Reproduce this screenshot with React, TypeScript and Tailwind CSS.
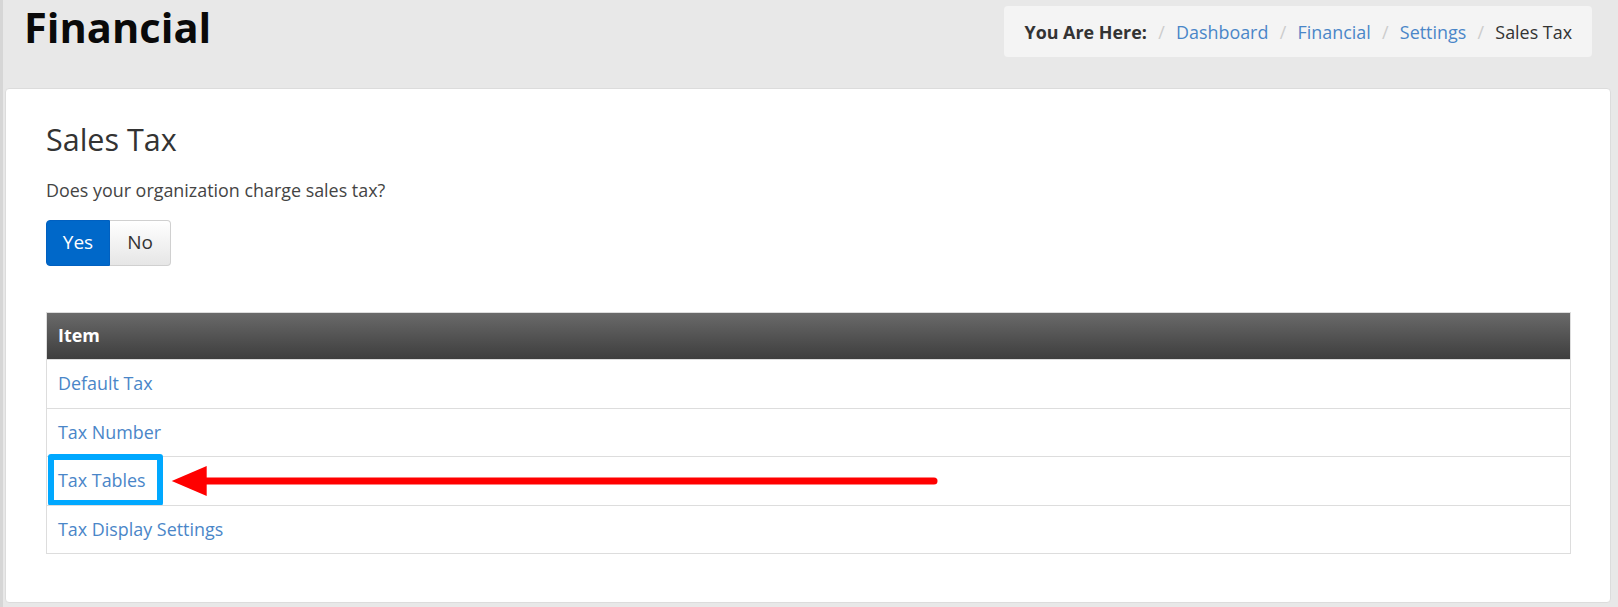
import React from "react";

const crumbs = [
  { label: "Dashboard", link: true },
  { label: "Financial", link: true },
  { label: "Settings", link: true },
  { label: "Sales Tax", link: false },
];

const items = ["Default Tax", "Tax Number", "Tax Tables", "Tax Display Settings"];

const Breadcrumb = () => (
  <div className="mt-[6px] flex items-center rounded-[4px] bg-[#f4f4f4] px-[20px] py-[13.5px] text-[17.9px] leading-[24px]">
    <span className="font-bold text-[#333333]">You Are Here:</span>
    {crumbs.map((c) => (
      <React.Fragment key={c.label}>
        <span className="px-[11.3px] text-[#cccccc]">/</span>
        <span className={c.link ? "text-[#4a86c8]" : "text-[#333333]"}>{c.label}</span>
      </React.Fragment>
    ))}
  </div>
);

const Annotation = () => (
  <>
    <div className="pointer-events-none absolute left-[1.3px] top-[-2.7px] h-[51.7px] w-[115px] rounded-[3px] border-[6px] border-[#00a8ff]" />
    <svg
      className="pointer-events-none absolute left-[123px] top-0"
      width="780"
      height="48"
      viewBox="0 0 780 48"
    >
      <line x1="30" y1="24" x2="764" y2="24" stroke="#ff0000" strokeWidth="7" strokeLinecap="round" />
      <polygon points="1.7,24 36.7,9 36.7,39" fill="#ff0000" />
    </svg>
  </>
);

export default function App() {
  return (
    <div
      className="min-h-screen border-l-[3px] border-[#d6d6d6] bg-[#e8e8e8] pb-[5px]"
      style={{ fontFamily: '"Open Sans", "Noto Sans", sans-serif' }}
    >
      <div className="flex h-[88px] items-start justify-between pl-[21px] pr-[26px]">
        <h1 className="mt-[3.2px] text-[41.6px] font-bold leading-[48px] text-[#0a0a0a]">Financial</h1>
        <Breadcrumb />
      </div>

      <div className="ml-[2px] mr-[7px] rounded-[4px] border border-[#dcdcdc] bg-white pb-[48px] pl-[40px] pr-[39px] pt-[32px]">
        <h2 className="text-[30.5px] leading-[36px] text-[#333333]">Sales Tax</h2>
        <p className="mt-[21px] text-[17.9px] leading-[24px] text-[#444444]">Does your organization charge sales tax?</p>

        <div className="mt-[17.5px] flex h-[46px] w-fit text-[19px]">
          <button className="w-[64px] rounded-l-[4px] border border-[#0060c0] bg-[#0068c9] text-white">Yes</button>
          <button className="w-[61px] rounded-r-[4px] border border-l-0 border-[#d0d0d0] bg-linear-to-b from-[#ffffff] to-[#e6e6e6] text-[#333333]">
            No
          </button>
        </div>

        <div className="mt-[46px] border border-[#dddddd] text-[17.9px]">
          <div className="flex h-[46.5px] items-center bg-linear-to-b from-[#6a6a6a] to-[#3e3e3e] pl-[11px] font-bold text-white">
            Item
          </div>
          {items.map((item) => (
            <div
              key={item}
              className="relative flex h-[48.5px] items-center border-t border-[#dddddd] pl-[11px] text-[#4a86c8]"
            >
              {item}
              {item === "Tax Tables" && <Annotation />}
            </div>
          ))}
        </div>
      </div>
    </div>
  );
}
